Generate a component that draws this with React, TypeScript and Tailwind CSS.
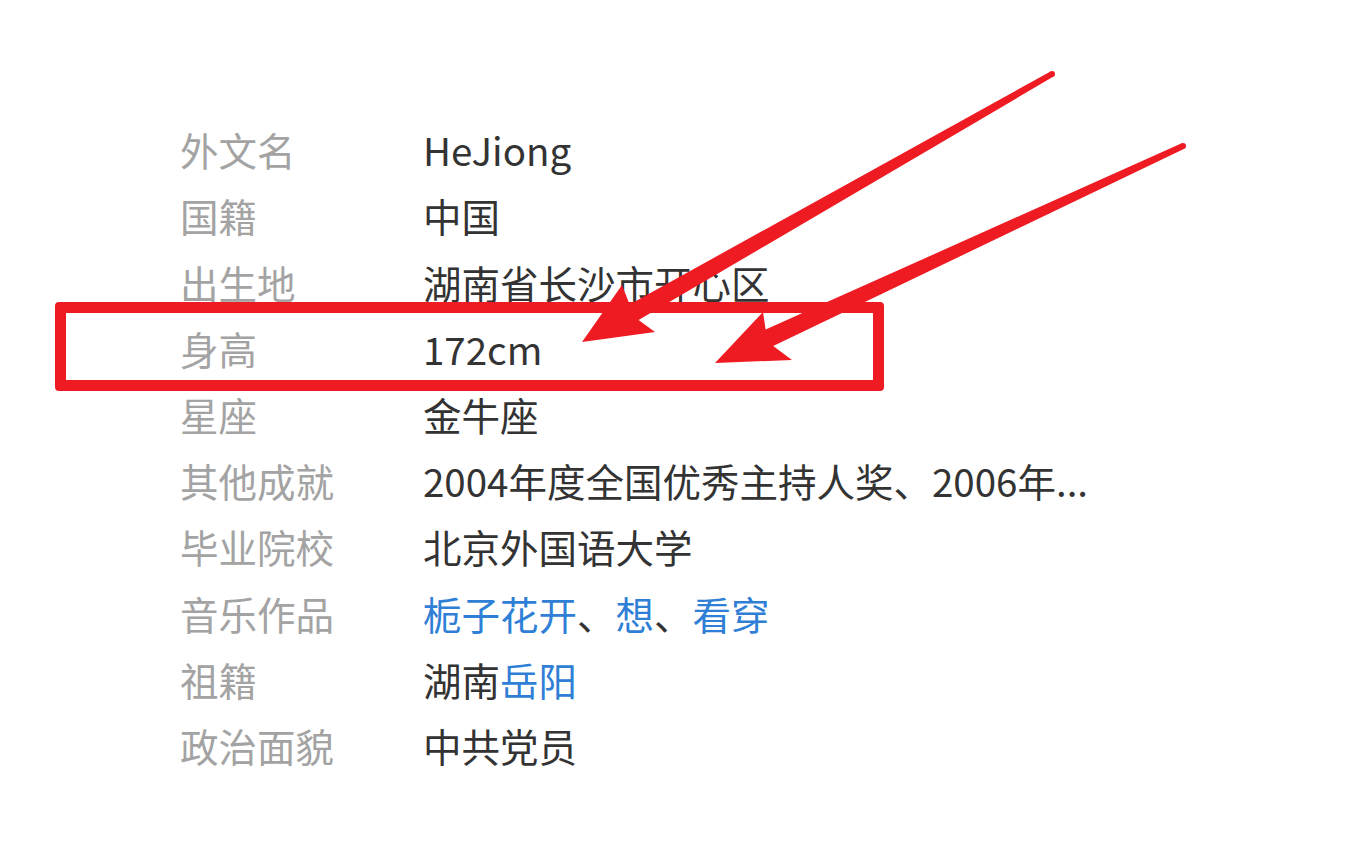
const rows: { label: string; value: React.ReactNode }[] = [
  { label: "外文名", value: "HeJiong" },
  { label: "国籍", value: "中国" },
  { label: "出生地", value: "湖南省长沙市开心区" },
  { label: "身高", value: "172cm" },
  { label: "星座", value: "金牛座" },
  { label: "其他成就", value: "2004年度全国优秀主持人奖、2006年..." },
  { label: "毕业院校", value: "北京外国语大学" },
  {
    label: "音乐作品",
    value: (
      <>
        <span className="text-[#2f7fd6]">栀子花开</span>、<span className="text-[#2f7fd6]">想</span>、
        <span className="text-[#2f7fd6]">看穿</span>
      </>
    ),
  },
  {
    label: "祖籍",
    value: (
      <>
        湖南<span className="text-[#2f7fd6]">岳阳</span>
      </>
    ),
  },
  { label: "政治面貌", value: "中共党员" },
]

function Arrows() {
  return (
    <svg className="pointer-events-none absolute inset-0" width="1366" height="868" viewBox="0 0 1366 868">
      <g fill="#ef1b22">
        <polygon points="1050.5,71.4 629.6,304.5 622,285 582,342 655,332 638.6,320.1 1053.5,76.6" />
        <circle cx="1052" cy="74" r="3" />
        <polygon points="1181.7,143.3 765.6,329.6 763,312 715,363 792,360 773.2,346 1184.3,148.7" />
        <circle cx="1183" cy="146" r="3" />
      </g>
    </svg>
  )
}

export default function App() {
  return (
    <div
      className="relative h-[868px] w-[1366px] overflow-hidden bg-white"
      style={{ fontFamily: '"Noto Sans CJK SC", "Noto Sans", sans-serif' }}
    >
      <div className="pl-[180px] pt-[117px]">
        {rows.map((r) => (
          <div key={r.label} className="flex h-[66.2px] items-center text-[38.5px]">
            <div className="w-[243px] shrink-0 text-[#a3a3a3]">{r.label}</div>
            <div className="whitespace-nowrap text-[#333333]">{r.value}</div>
          </div>
        ))}
      </div>

      {/* highlight box */}
      <div className="absolute left-[55px] top-[302px] h-[89px] w-[829px] rounded-[4px] border-[11px] border-[#ef1b22]" />
      <Arrows />
    </div>
  )
}
